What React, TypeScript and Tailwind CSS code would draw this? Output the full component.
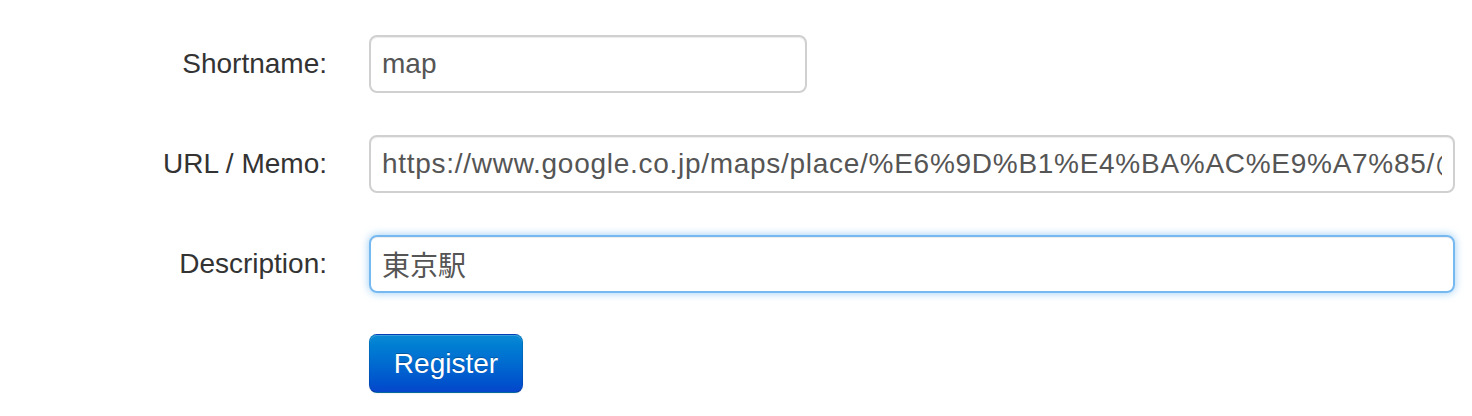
export default function App() {
  return (
    <div className="min-h-screen bg-white pt-[35px] font-['Liberation_Sans','Noto_Sans_CJK_JP',sans-serif]">
      <form className="flex flex-col gap-[42px]" onSubmit={(e) => e.preventDefault()}>
        {/* Shortname */}
        <div className="flex items-center gap-[42px]">
          <label className="w-[327px] text-right text-[28px] text-[#333]">Shortname:</label>
          <input
            defaultValue="map"
            className="h-[58px] w-[438px] rounded-[8px] border-2 border-[#d0d0d0] px-[11px] text-[28px] text-[#555] shadow-[inset_0_1px_1px_rgba(0,0,0,0.075)] outline-none"
          />
        </div>

        {/* URL / Memo */}
        <div className="flex items-center gap-[42px]">
          <label className="w-[327px] text-right text-[28px] text-[#333]">URL / Memo:</label>
          <input
            defaultValue="https://www.google.co.jp/maps/place/%E6%9D%B1%E4%BA%AC%E9%A7%85/@35.6812362,139.7649361,17z"
            className="h-[58px] w-[1086px] rounded-[8px] border-2 border-[#d0d0d0] px-[11px] text-[28px] tracking-[0.72px] text-[#555] shadow-[inset_0_1px_1px_rgba(0,0,0,0.075)] outline-none"
          />
        </div>

        {/* Description (focused) */}
        <div className="flex items-center gap-[42px]">
          <label className="w-[327px] text-right text-[28px] text-[#333]">Description:</label>
          <input
            defaultValue="東京駅"
            className="h-[58px] w-[1086px] rounded-[8px] border-2 border-[rgba(82,168,236,0.8)] px-[11px] text-[28px] text-[#555] shadow-[inset_0_1px_1px_rgba(0,0,0,0.075),0_0_8px_rgba(82,168,236,0.6)] outline-none"
          />
        </div>

        <div className="-mt-px flex gap-[42px]">
          <div className="w-[327px]" />
          <button
            type="submit"
            className="h-[59px] w-[154px] rounded-[8px] border border-[rgba(0,0,0,0.1)] border-b-[rgba(0,0,0,0.25)] bg-gradient-to-b from-[#0a8ad4] to-[#0646cb] text-[28px] text-white shadow-[inset_0_1px_0_rgba(255,255,255,0.2),0_1px_2px_rgba(0,0,0,0.05)] [text-shadow:0_-1px_0_rgba(0,0,0,0.25)]"
          >
            Register
          </button>
        </div>
      </form>
    </div>
  );
}
